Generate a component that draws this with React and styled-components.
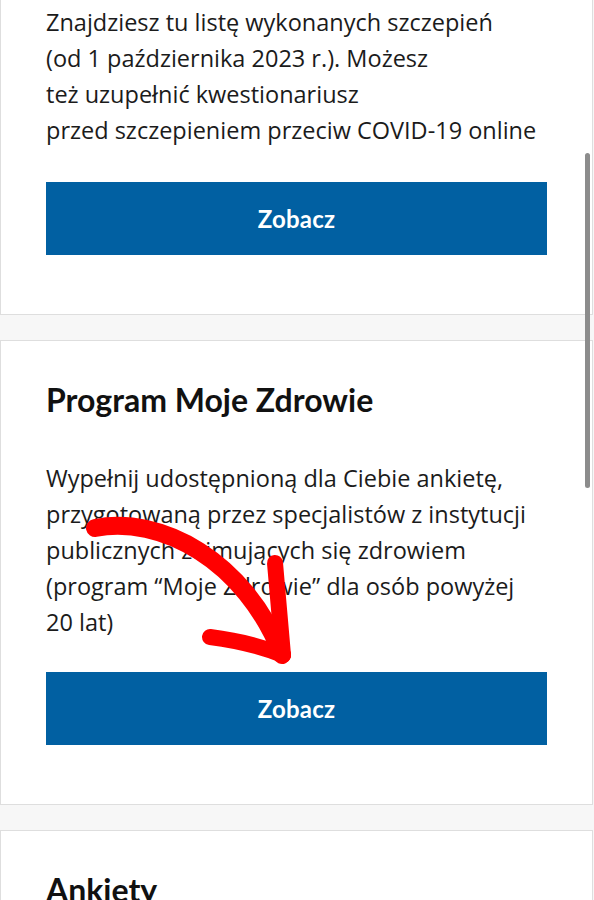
import React from "react";
import styled, { createGlobalStyle } from "styled-components";

const Global = createGlobalStyle`
  html, body { margin: 0; padding: 0; background: #f7f7f7; }
  body { font-family: "Open Sans", "Noto Sans", sans-serif; color: #1b1b1b; }
  * { box-sizing: border-box; }
`;

const Page = styled.div`
  position: relative;
  width: 594px;
  height: 900px;
  overflow: hidden;
  display: flex;
  flex-direction: column;
  gap: 25px;
  background: #f7f7f7;
`;

const Card = styled.section`
  position: relative;
  background: #ffffff;
  border: 1px solid #dedede;
  border-top-width: ${(p) => (p.$clipped ? "0" : "1px")};
  margin-right: 1px;
  padding: ${(p) => (p.$clipped ? "4px 45px 59px" : "39px 45px 59px")};
  flex-shrink: 0;
`;

const Title = styled.h2`
  margin: 0 0 40px;
  font-family: Lato, "Noto Sans", sans-serif;
  font-weight: 700;
  font-size: 32px;
  line-height: 40px;
  color: #111;
`;

const Text = styled.p`
  margin: 0;
  font-family: "Open Sans", sans-serif;
  font-size: 23.5px;
  line-height: 36px;
  color: #1b1b1b;
  white-space: nowrap;
`;

const Button = styled.button`
  display: flex;
  align-items: center;
  justify-content: center;
  width: 100%;
  height: 73px;
  margin-top: ${(p) => p.$gap || 33}px;
  border: 0;
  background: #0160a2;
  color: #fff;
  font-family: Lato, "Noto Sans", sans-serif;
  font-weight: 700;
  font-size: 24px;
  letter-spacing: 0.2px;
  cursor: pointer;
`;

const Arrow = styled.svg`
  position: absolute;
  left: 69px;
  top: 170px;
  width: 240px;
  height: 170px;
  pointer-events: none;
  overflow: visible;
`;

const Scrollbar = styled.div`
  position: absolute;
  left: 585px;
  top: 153px;
  width: 5px;
  height: 335px;
  border-radius: 3px;
  background: #8c8c8c;
`;

export default function App() {
  return (
    <>
      <Global />
      <Page>
        <Card $clipped>
          <Text>
            Znajdziesz tu listę wykonanych szczepień
            <br />
            (od 1 października 2023 r.). Możesz
            <br />
            też uzupełnić kwestionariusz
            <br />
            przed szczepieniem przeciw COVID-19 online
          </Text>
          <Button $gap={34}>Zobacz</Button>
        </Card>
        <Card>
          <Title>Program Moje Zdrowie</Title>
          <Text>
            Wypełnij udostępnioną dla Ciebie ankietę,
            <br />
            przygotowaną przez specjalistów z instytucji
            <br />
            publicznych zajmujących się zdrowiem
            <br />
            (program “Moje Zdrowie” dla osób powyżej
            <br />
            20 lat)
          </Text>
          <Button $gap={32}>Zobacz</Button>
          <Arrow viewBox="0 0 240 170">
            <g transform="translate(-70 -511)" fill="none" stroke="#ff0000" strokeLinecap="round" strokeLinejoin="round">
              <path d="M 95 528 C 160 515, 245 560, 282 655" strokeWidth="18" />
              <path d="M 275 563 Q 279 610, 283 655" strokeWidth="16" />
              <path d="M 210 637 Q 250 642, 283 655" strokeWidth="16" />
            </g>
          </Arrow>
        </Card>
        <Card>
          <Title>Ankiety</Title>
        </Card>
        <Scrollbar />
      </Page>
    </>
  );
}
